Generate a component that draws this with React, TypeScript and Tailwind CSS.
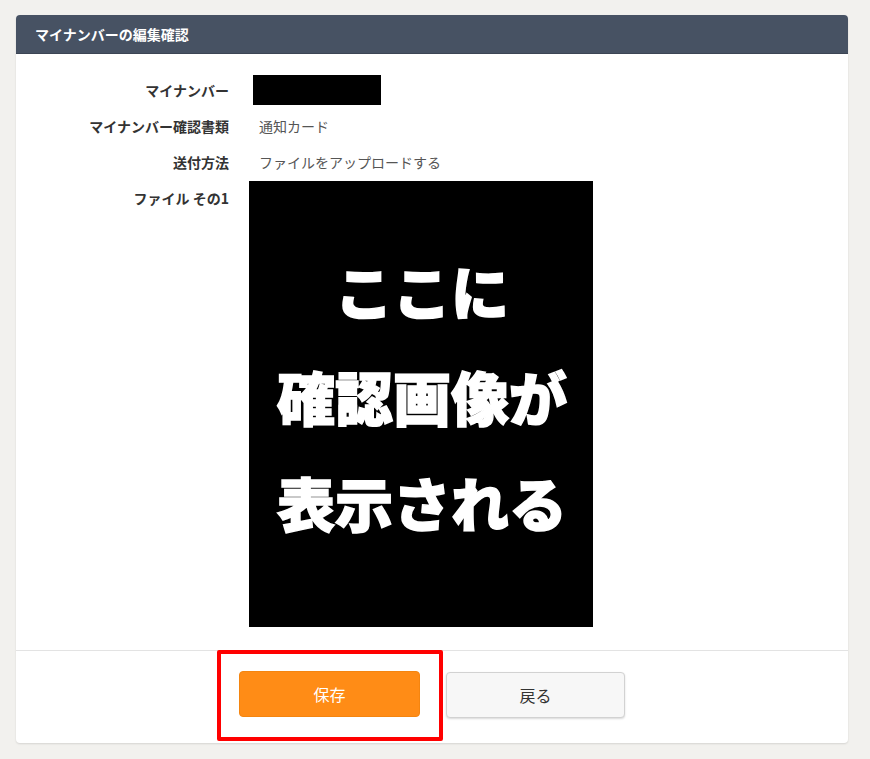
import React from "react";

const font = { fontFamily: '"Noto Sans CJK JP", "Noto Sans", sans-serif' };

function Row({ label, children, top = false }: { label: string; children: React.ReactNode; top?: boolean }) {
  return (
    <div className={`flex ${top ? "items-start" : "items-center"} min-h-[36px]`}>
      <div className="w-[233px] shrink-0 pr-[20px] h-[36px] flex items-center justify-end text-[14px] font-bold text-[#333333]">
        {label}
      </div>
      <div className="flex-1 text-[14px] text-[#555555]">{children}</div>
    </div>
  );
}

export default function App() {
  return (
    <div className="min-h-[759px] w-[870px] bg-[#f2f1ee] pt-[15px] pl-[16px]" style={font}>
      <div className="w-[832px] bg-white rounded-[4px] shadow-[0_1px_2px_rgba(0,0,0,0.12)]">
        <div className="h-[39px] bg-[#475263] rounded-t-[4px] border-b border-[#3c4554] flex items-center pl-[19px] text-white text-[14px] font-bold">
          マイナンバーの編集確認
        </div>
        <div className="pt-[18px] pb-[23px]">
          <Row label="マイナンバー">
            <div className="ml-[4px] w-[128px] h-[30px] bg-black" />
          </Row>
          <Row label="マイナンバー確認書類">
            <span className="pl-[10px]">通知カード</span>
          </Row>
          <Row label="送付方法">
            <span className="pl-[10px]">ファイルをアップロードする</span>
          </Row>
          <Row label="ファイル その1" top>
            <div className="mt-[1px] w-[344px] h-[446px] bg-black flex flex-col items-center justify-center text-white text-[58px] font-black leading-[106px] [-webkit-text-stroke:1.5px_white] pb-[16px] pl-[2px]">
              <span>ここに</span>
              <span>確認画像が</span>
              <span>表示される</span>
            </div>
          </Row>
        </div>
        <div className="border-t border-[#e3e3e3] pt-[20px] pb-[25px] flex justify-center gap-[26px]">
          <div className="relative">
            <button className="w-[181px] h-[46px] rounded-[4px] bg-[#ff8c16] border border-[#f48510] text-white text-[16px]">
              保存
            </button>
            <span className="absolute -left-[22px] -top-[21px] -right-[23px] -bottom-[23px] border-4 border-[#ff0000] rounded-[2px] pointer-events-none" />
          </div>
          <button className="mt-[1px] w-[179px] h-[46px] rounded-[4px] bg-[#f7f7f7] border border-[#d2d2d2] shadow-[0_1px_2px_rgba(0,0,0,0.15)] text-[#333333] text-[16px]">
            戻る
          </button>
        </div>
      </div>
    </div>
  );
}
